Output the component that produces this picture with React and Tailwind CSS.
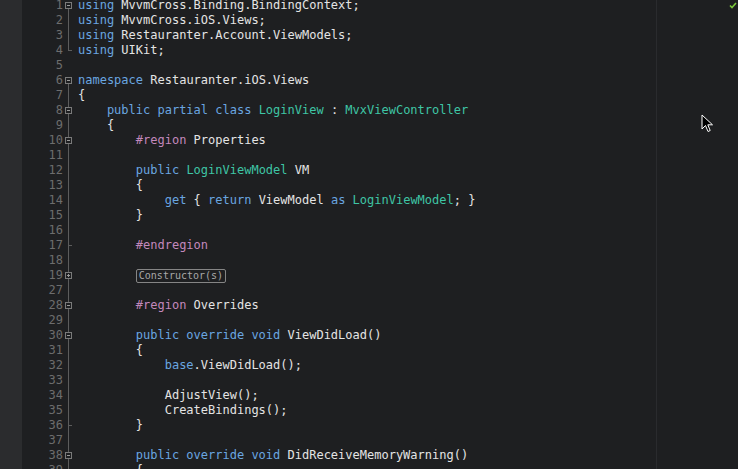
import React from "react";

const K = "text-[#6aa6e0]";
const T = "text-[#3ec5a5]";
const R = "text-[#c388bc]";
const P = "text-[#e4e4e4]";

const rows = [
  { n: 1, f: "open", code: [[K, "using"], [P, " MvvmCross.Binding.BindingContext;"]] },
  { n: 2, f: "line", code: [[K, "using"], [P, " MvvmCross.iOS.Views;"]] },
  { n: 3, f: "line", code: [[K, "using"], [P, " Restauranter.Account.ViewModels;"]] },
  { n: 4, f: "end", code: [[K, "using"], [P, " UIKit;"]] },
  { n: 5, f: "none", code: [] },
  { n: 6, f: "open", code: [[K, "namespace"], [P, " Restauranter.iOS.Views"]] },
  { n: 7, f: "line", code: [[P, "{"]] },
  { n: 8, f: "openIn", code: [[K, "    public partial class"], [P, " "], [T, "LoginView"], [P, " : "], [T, "MvxViewController"]] },
  { n: 9, f: "line", code: [[P, "    {"]] },
  { n: 10, f: "openIn", code: [[R, "        #region"], [P, " Properties"]] },
  { n: 11, f: "line", code: [] },
  { n: 12, f: "line", code: [[K, "        public"], [P, " "], [T, "LoginViewModel"], [P, " VM"]] },
  { n: 13, f: "line", code: [[P, "        {"]] },
  { n: 14, f: "line", code: [[K, "            get"], [P, " { "], [K, "return"], [P, " ViewModel "], [K, "as"], [P, " "], [T, "LoginViewModel"], [P, "; }"]] },
  { n: 15, f: "line", code: [[P, "        }"]] },
  { n: 16, f: "line", code: [] },
  { n: 17, f: "tick", code: [[R, "        #endregion"]] },
  { n: 18, f: "line", code: [] },
  { n: 19, f: "closed", box: true },
  { n: 27, f: "line", code: [] },
  { n: 28, f: "openIn", code: [[R, "        #region"], [P, " Overrides"]] },
  { n: 29, f: "line", code: [] },
  { n: 30, f: "openIn", code: [[K, "        public override void"], [P, " ViewDidLoad()"]] },
  { n: 31, f: "line", code: [[P, "        {"]] },
  { n: 32, f: "line", code: [[K, "            base"], [P, ".ViewDidLoad();"]] },
  { n: 33, f: "line", code: [] },
  { n: 34, f: "line", code: [[P, "            AdjustView();"]] },
  { n: 35, f: "line", code: [[P, "            CreateBindings();"]] },
  { n: 36, f: "tick", code: [[P, "        }"]] },
  { n: 37, f: "line", code: [] },
  { n: 38, f: "openIn", code: [[K, "        public override void"], [P, " DidReceiveMemoryWarning()"]] },
  { n: 39, f: "line", code: [[P, "        {"]] },
];

const Fold = ({ f }) => {
  const box = f === "open" || f === "openIn" || f === "closed";
  const above = f === "openIn" || f === "closed";
  const below = box;
  return (
    <div className="relative w-[15px] h-[15px] shrink-0">
      {above && <div className="absolute left-[5px] top-0 h-[4px] w-px bg-[#5c5c5c]" />}
      {below && <div className="absolute left-[5px] top-[11px] bottom-0 w-px bg-[#5c5c5c]" />}
      {(f === "line" || f === "tick") && (
        <div className="absolute left-[5px] top-0 bottom-0 w-px bg-[#5c5c5c]" />
      )}
      {f === "end" && <div className="absolute left-[5px] top-0 h-[8px] w-px bg-[#5c5c5c]" />}
      {(f === "end" || f === "tick") && (
        <div className="absolute left-[5px] top-[7px] h-px w-[4px] bg-[#5c5c5c]" />
      )}
      {box && (
        <div className="absolute left-[2px] top-[4px] w-[7px] h-[7px] border border-[#7a7a7a] bg-[#1e1f21]">
          <div className="absolute left-[1px] top-[2px] w-[3px] h-px bg-[#9a9a9a]" />
          {f === "closed" && (
            <div className="absolute left-[2px] top-[1px] w-px h-[3px] bg-[#9a9a9a]" />
          )}
        </div>
      )}
    </div>
  );
};

export default function App() {
  return (
    <div
      className="relative flex w-[738px] h-[469px] overflow-hidden bg-[#1e1f21]"
      style={{ fontFamily: '"DejaVu Sans Mono", "Liberation Mono", monospace' }}
    >
      <div className="w-[22px] shrink-0 bg-[#2b2c2e]" />
      <div className="relative flex-1">
        <div className="absolute left-[634px] top-0 bottom-0 w-px bg-[#2a2b2e]" />
        <div className="flex flex-col -mt-[2px] text-[12px] leading-[15px]">
          {rows.map((r) => (
            <div key={r.n} className="flex h-[15px] items-center">
              <div className="w-[41px] shrink-0 text-right text-[#6d6d6d]">{r.n}</div>
              <Fold f={r.f} />
              {r.box ? (
                <div className="flex items-center whitespace-pre">
                  <span>{"        "}</span>
                  <span className="h-[14px] px-[2px] border border-[#858585] rounded-[2px] text-[10px] leading-[12px] text-[#a8a8a8]">
                    Constructor(s)
                  </span>
                </div>
              ) : (
                <div className="whitespace-pre">
                  {r.code.map(([c, t], i) => (
                    <span key={i} className={c}>
                      {t}
                    </span>
                  ))}
                </div>
              )}
            </div>
          ))}
        </div>
        <svg className="absolute right-[1px] top-[2px]" width="8" height="7" viewBox="0 0 8 7">
          <polyline points="1,3.5 3,5.5 7,1" fill="none" stroke="#7cc83c" strokeWidth="1.6" />
        </svg>
        <svg className="absolute left-[679px] top-[114px]" width="13" height="19" viewBox="0 0 13 19">
          <path
            d="M1 1 L1 15 L4.5 11.5 L7 17.5 L9.2 16.5 L6.8 10.8 L11.5 10.8 Z"
            fill="#000"
            stroke="#fff"
            strokeWidth="1"
            strokeLinejoin="miter"
          />
        </svg>
      </div>
    </div>
  );
}
